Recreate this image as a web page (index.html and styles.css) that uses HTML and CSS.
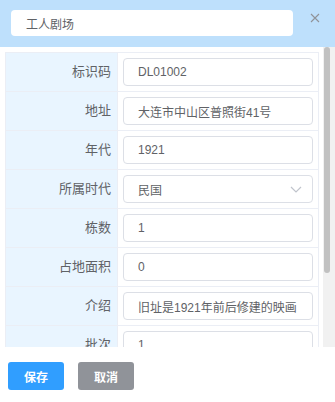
FILE: index.html
```html
<!DOCTYPE html>
<html lang="zh-CN">
<head>
    <meta charset="UTF-8">
    <meta name="viewport" content="width=device-width, initial-scale=1.0">
    <title>编辑建筑</title>
    <link rel="stylesheet" href="styles.css">
</head>
<body>
    <div class="header">
        <input class="title-input" type="text" value="工人剧场">
        <span class="close">
            <svg width="10" height="10" viewBox="0 0 10 10"><path d="M1 1L9 9M9 1L1 9" stroke="#909399" stroke-width="1.1" fill="none"/></svg>
        </span>
    </div>

    <div class="main">
        <div class="body">
            <div class="form-grid">
                <div class="row">
                    <div class="label">标识码</div>
                    <div class="value"><input class="field" type="text" value="DL01002"></div>
                </div>
                <div class="row">
                    <div class="label">地址</div>
                    <div class="value"><input class="field" type="text" value="大连市中山区普照街41号"></div>
                </div>
                <div class="row">
                    <div class="label">年代</div>
                    <div class="value"><input class="field" type="text" value="1921"></div>
                </div>
                <div class="row">
                    <div class="label">所属时代</div>
                    <div class="value">
                        <div class="select">
                            <input class="field" type="text" value="民国" readonly>
                            <svg class="arrow" width="12" height="7" viewBox="0 0 12 7"><path d="M1 1L6 6L11 1" stroke="#c0c4cc" stroke-width="1.2" fill="none"/></svg>
                        </div>
                    </div>
                </div>
                <div class="row">
                    <div class="label">栋数</div>
                    <div class="value"><input class="field" type="text" value="1"></div>
                </div>
                <div class="row">
                    <div class="label">占地面积</div>
                    <div class="value"><input class="field" type="text" value="0"></div>
                </div>
                <div class="row">
                    <div class="label">介绍</div>
                    <div class="value"><input class="field" type="text" value="旧址是1921年前后修建的映画"></div>
                </div>
                <div class="row">
                    <div class="label">批次</div>
                    <div class="value"><input class="field" type="text" value="1"></div>
                </div>
            </div>
        </div>
        <div class="scrollbar">
            <div class="thumb"></div>
        </div>
    </div>

    <div class="footer">
        <button class="btn btn-primary">保存</button>
        <button class="btn btn-cancel">取消</button>
    </div>
</body>
</html>
```

FILE: styles.css
```css
body {
    margin: 0;
    padding: 0;
    width: 335px;
    height: 402px;
    overflow: hidden;
    background-color: #fff;
    font-family: "Liberation Sans", "Noto Sans CJK SC", sans-serif;
    color: #606266;
    display: flex;
    flex-direction: column;
}
.header {
    height: 47px;
    flex-shrink: 0;
    background-color: #bee0fc;
    display: flex;
    align-items: flex-start;
    padding: 10px 0 0 11px;
    box-sizing: border-box;
}
.title-input {
    width: 282px;
    height: 26px;
    box-sizing: border-box;
    border: none;
    border-radius: 4px;
    background-color: #fff;
    padding: 0 15px;
    font-family: inherit;
    font-size: 12px;
    color: #606266;
    outline: none;
}
.close {
    margin: 3px 0 0 17px;
    width: 10px;
    height: 10px;
    display: flex;
}
.main {
    height: 300px;
    flex-shrink: 0;
    display: flex;
}
.body {
    flex: 1;
    overflow: hidden;
    padding: 5px 4px 0 5px;
}
.scrollbar {
    width: 12px;
    background-color: #f1f1f1;
    padding-left: 1px;
    box-sizing: border-box;
}
.thumb {
    width: 6px;
    height: 226px;
    background-color: #c1c1c1;
    border-radius: 3px;
}
.form-grid {
    border: 1px solid #ebeef5;
    border-bottom: none;
}
.row {
    display: grid;
    grid-template-columns: 112px 1fr;
    border-bottom: 1px solid #ebeef5;
}
.label {
    background-color: #e9f5ff;
    border-right: 1px solid #ebeef5;
    text-align: right;
    padding-right: 6px;
    font-size: 13px;
    line-height: 38px;
}
.value {
    padding: 5px;
}
.field {
    display: block;
    width: 100%;
    height: 28px;
    box-sizing: border-box;
    border: 1px solid #dcdfe6;
    border-radius: 4px;
    padding: 0 14px;
    font-family: inherit;
    font-size: 12px;
    color: #606266;
    background-color: #fff;
    outline: none;
}
.select {
    position: relative;
}
.select .arrow {
    position: absolute;
    right: 11px;
    top: 11px;
}
.footer {
    flex: 1;
    display: flex;
    align-items: flex-start;
    gap: 14px;
    padding: 15px 8px 0;
}
.btn {
    width: 56px;
    height: 28px;
    border: none;
    border-radius: 3px;
    color: #fff;
    font-family: inherit;
    font-size: 12px;
    font-weight: bold;
    cursor: pointer;
}
.btn-primary {
    background-color: #309eff;
}
.btn-cancel {
    background-color: #909399;
}
```
